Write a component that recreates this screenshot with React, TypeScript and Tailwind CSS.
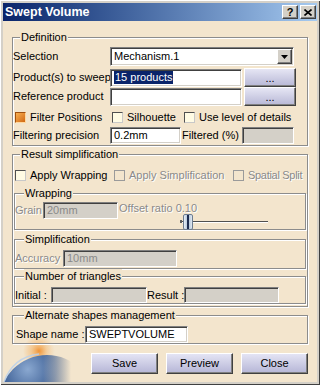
import React from 'react';

const sunken =
  'border border-t-[#808080] border-l-[#808080] border-r-white border-b-white shadow-[inset_1px_1px_0_#404040,inset_-1px_-1px_0_#d4d0c8]';
const raised =
  'border border-t-white border-l-white border-r-[#404040] border-b-[#404040] shadow-[inset_-1px_-1px_0_#808080]';
const dim = 'text-[#8a8a8a] [text-shadow:1px_1px_0_#fff]';

function Group({ label, labelPos, className, children }: { label: string; labelPos: string; className: string; children: React.ReactNode }) {
  return (
    <div className={`relative flex flex-col border border-[#8c8c8c] shadow-[1px_1px_0_#fff,inset_1px_1px_0_#fff] ${className}`}>
      <span className={`absolute top-[-8px] bg-[#f3e5cd] px-[1px] leading-[14px] whitespace-nowrap ${labelPos}`}>{label}</span>
      {children}
    </div>
  );
}

function Field({ className, disabled, children }: { className: string; disabled?: boolean; children?: React.ReactNode }) {
  return (
    <div className={`flex items-center pl-[3px] whitespace-nowrap ${sunken} ${disabled ? 'bg-[#d4d0c8] text-[#8a8a8a]' : 'bg-white'} ${className}`}>
      {children}
    </div>
  );
}

function Check({ checked, disabled, label, className }: { checked?: boolean; disabled?: boolean; label: string; className: string }) {
  return (
    <div className={`flex items-center gap-[4px] whitespace-nowrap ${className}`}>
      {checked ? (
        <div className="w-[11px] h-[11px] border border-t-[#a05010] border-l-[#a05010] border-r-[#ffd8a0] border-b-[#ffd8a0] bg-linear-to-br from-[#f8b050] to-[#d06810]" />
      ) : (
        <div
          className={`w-[11px] h-[11px] border ${
            disabled
              ? 'border-[#9a9a9a] bg-transparent'
              : 'border-t-[#505050] border-l-[#505050] border-r-[#c8c8c8] border-b-[#c8c8c8] bg-[#fffbe4]'
          }`}
        />
      )}
      <span className={disabled ? dim : ''}>{label}</span>
    </div>
  );
}

function DotsButton() {
  return (
    <div className={`ml-[2px] w-[52px] h-[19px] flex items-end justify-center pb-[2px] leading-none bg-linear-to-b from-[#e6e6f4] to-[#b8b8d6] ${raised}`}>
      ...
    </div>
  );
}

function ActionButton({ label }: { label: string }) {
  return (
    <div className={`w-[67px] h-[21px] flex items-center justify-center bg-linear-to-b from-[#e4e4f4] to-[#b6b6d6] ${raised}`}>
      {label}
    </div>
  );
}

export default function App() {
  return (
    <div className="w-[320px] h-[385px] bg-[#d4d0c8] p-[3px] shadow-[inset_1px_1px_0_#fff,inset_-1px_-1px_0_#404040] font-['Liberation_Sans',Arial,sans-serif] text-[11px] text-black">
      <div className="relative h-full flex flex-col overflow-hidden bg-[#f3e5cd]">
        {/* globe decoration, bottom left */}
        <svg className="absolute left-0 bottom-0" width="80" height="45" viewBox="0 0 80 45">
          <defs>
            <radialGradient id="glow" cx="0.5" cy="0.5" r="0.5">
              <stop offset="0" stopColor="#f09030" stopOpacity="0.95" />
              <stop offset="0.5" stopColor="#f4b060" stopOpacity="0.5" />
              <stop offset="1" stopColor="#f4b060" stopOpacity="0" />
            </radialGradient>
            <radialGradient id="planet" cx="0.3" cy="0.15" r="0.85">
              <stop offset="0" stopColor="#8aa8d0" />
              <stop offset="0.35" stopColor="#3a5c92" />
              <stop offset="1" stopColor="#0c1c3c" />
            </radialGradient>
            <linearGradient id="fade" x1="0" y1="0" x2="1" y2="0">
              <stop offset="0.5" stopColor="#f3e5cd" stopOpacity="0" />
              <stop offset="0.85" stopColor="#f3e5cd" stopOpacity="1" />
            </linearGradient>
          </defs>
          <circle cx="36" cy="14" r="16" fill="url(#glow)" />
          <circle cx="44" cy="66" r="48" fill="url(#planet)" />
          <path d="M1 45 Q10 20 36 17" stroke="#b8d0ec" strokeWidth="1.5" fill="none" opacity="0.85" />
          <rect x="0" y="0" width="80" height="45" fill="url(#fade)" />
        </svg>

        {/* title bar */}
        <div className="h-[18px] flex items-center justify-between pl-[2px] pr-[1px] bg-linear-to-r from-[#0a246a] to-[#a6caf0]">
          <span className="text-white font-bold text-[12.5px] leading-none">Swept Volume</span>
          <div className="flex gap-[2px]">
            <div className={`w-[16px] h-[14px] flex items-center justify-center bg-[#d4d0c8] font-bold text-[11px] leading-none ${raised}`}>?</div>
            <div className={`w-[16px] h-[14px] flex items-center justify-center bg-[#d4d0c8] ${raised}`}>
              <svg width="8" height="7" viewBox="0 0 8 7">
                <path d="M0.5 0.5 L7.5 6.5 M7.5 0.5 L0.5 6.5" stroke="#000" strokeWidth="1.6" />
              </svg>
            </div>
          </div>
        </div>

        {/* Definition */}
        <Group label="Definition" labelPos="left-[7px]" className="mt-[16px] mx-[9px] pt-[9px] pb-[1px]">
          <div className="flex items-center h-[19px]">
            <span className="w-[97px]">Selection</span>
            <div className={`relative w-[184px] h-[19px] flex items-center pl-[3px] bg-white ${sunken}`}>
              <span>Mechanism.1</span>
              <div className={`absolute right-[1px] top-[1px] w-[15px] h-[15px] flex items-center justify-center bg-[#d4d0c8] ${raised}`}>
                <svg width="7" height="4" viewBox="0 0 7 4">
                  <path d="M0 0 H7 L3.5 4 Z" fill="#000" />
                </svg>
              </div>
            </div>
          </div>
          <div className="mt-[2px] flex items-center h-[19px]">
            <span className="w-[97px] whitespace-nowrap">Product(s) to sweep</span>
            <Field className="w-[132px] h-[18px] pl-[2px]">
              <span className="bg-[#0a246a] text-white px-[1px] leading-[13px]">15 products</span>
            </Field>
            <DotsButton />
          </div>
          <div className="flex items-center h-[19px]">
            <span className="w-[97px] whitespace-nowrap">Reference product</span>
            <Field className="w-[132px] h-[18px]" />
            <DotsButton />
          </div>
          <div className="mt-[5px] flex items-center h-[12px] pl-[2px]">
            <Check checked label="Filter Positions" className="w-[97px]" />
            <Check label="Silhouette" className="w-[72px]" />
            <Check label="Use level of details" className="" />
          </div>
          <div className="mt-[4px] flex items-center h-[17px]">
            <span className="w-[97px] whitespace-nowrap">Filtering precision</span>
            <Field className="w-[71px] h-[17px]">0.2mm</Field>
            <span className="w-[61px] pl-[1px] whitespace-nowrap">Filtered (%)</span>
            <Field disabled className="w-[52px] h-[17px]" />
          </div>
        </Group>

        {/* Result simplification */}
        <Group label="Result simplification" labelPos="left-[7px]" className="mt-[8px] mx-[9px] pt-[14px] pb-[2px]">
          <div className="flex items-center h-[12px] pl-[2px]">
            <Check label="Apply Wrapping" className="w-[99px]" />
            <Check disabled label="Apply Simplification" className="w-[119px]" />
            <Check disabled label="Spatial Split" className="tracking-[-0.3px]" />
          </div>

          <Group label="Wrapping" labelPos="left-[9px]" className="mt-[12px] mx-[1px] pt-[8px]">
            <div className="flex items-start h-[27px]">
              <span className={`w-[28px] h-[17px] flex items-center ${dim}`}>Grain</span>
              <Field disabled className="w-[75px] h-[17px]">20mm</Field>
              <div className="ml-[1px] flex flex-col">
                <span className={`h-[13px] leading-[13px] whitespace-nowrap ${dim}`}>Offset ratio 0.10</span>
                <div className="relative ml-[61px] w-[88px] h-[14px]">
                  <div className="absolute left-0 top-[5px] w-[2px] h-[3px] bg-[#606060]" />
                  <div className="absolute left-[2px] right-0 top-[6px] h-[2px] border-t border-t-[#505050] border-b border-b-white" />
                  <div className="absolute left-[3px] top-[-1px] w-[10px] h-[16px] rounded-[2px] border border-[#6c7c90] bg-linear-to-r from-[#e8f0f8] via-[#a8bcd4] to-[#e0e8f0]">
                    <div className="mx-auto w-[2px] h-full bg-[#1c2c50]" />
                  </div>
                </div>
              </div>
            </div>
          </Group>

          <Group label="Simplification" labelPos="left-[9px]" className="mt-[9px] mx-[1px] pt-[10px] pb-[1px]">
            <div className="flex items-center h-[17px]">
              <span className={`w-[48px] ${dim}`}>Accuracy</span>
              <Field disabled className="w-[114px] h-[17px]">10mm</Field>
            </div>
          </Group>

          <Group label="Number of triangles" labelPos="left-[9px]" className="mt-[7px] mx-[1px] pt-[10px]">
            <div className="flex items-center h-[16px]">
              <span className="w-[36px] whitespace-nowrap">Initial :</span>
              <Field disabled className="w-[96px] h-[16px]" />
              <span className="w-[37px] whitespace-nowrap">Result :</span>
              <Field disabled className="w-[95px] h-[16px]" />
            </div>
          </Group>
        </Group>

        {/* Alternate shapes management */}
        <Group label="Alternate shapes management" labelPos="left-[11px]" className="mt-[8px] mx-[9px] pt-[10px] pl-[3px]">
          <div className="flex items-center h-[17px]">
            <span className="w-[69px] whitespace-nowrap">Shape name :</span>
            <Field className="w-[103px] h-[17px]">SWEPTVOLUME</Field>
          </div>
        </Group>

        {/* buttons */}
        <div className="mt-[9px] flex justify-end gap-[8px] pr-[9px]">
          <ActionButton label="Save" />
          <ActionButton label="Preview" />
          <ActionButton label="Close" />
        </div>
      </div>
    </div>
  );
}
